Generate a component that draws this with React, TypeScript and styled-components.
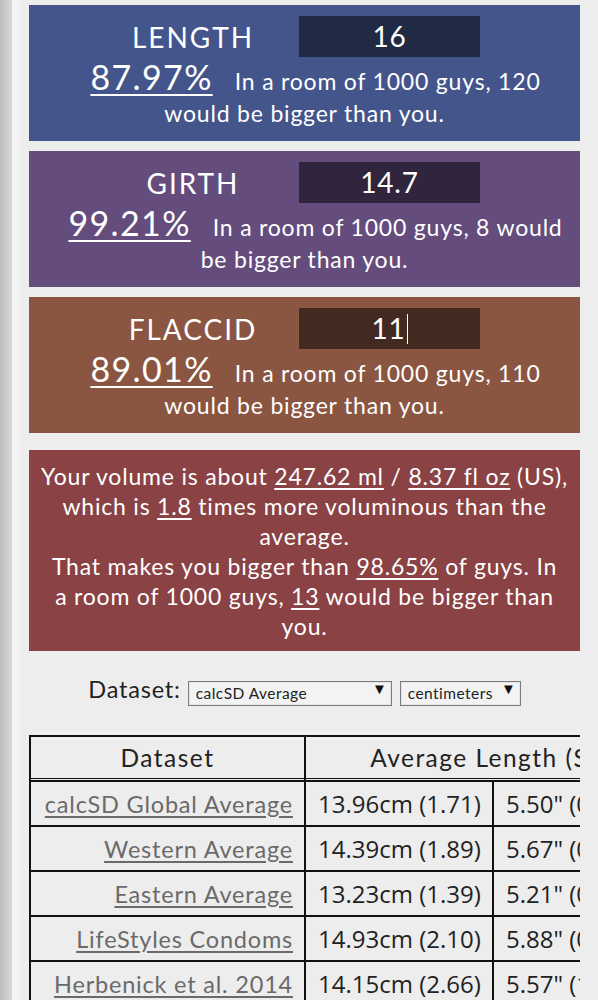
import { createGlobalStyle } from 'styled-components';
import styled from 'styled-components';

type TMeasure = {
  label: string;
  value: string;
  percent: string;
  text: string;
  bg: string;
  field: string;
  caret?: boolean;
};

type TRow = {
  name: string;
  cm: string;
  inch: string;
};

const measures: TMeasure[] = [
  {
    label: 'LENGTH',
    value: '16',
    percent: '87.97%',
    text: 'In a room of 1000 guys, 120 would be bigger than you.',
    bg: '#43558a',
    field: '#212a45'
  },
  {
    label: 'GIRTH',
    value: '14.7',
    percent: '99.21%',
    text: 'In a room of 1000 guys, 8 would be bigger than you.',
    bg: '#644c7c',
    field: '#31253e'
  },
  {
    label: 'FLACCID',
    value: '11',
    percent: '89.01%',
    text: 'In a room of 1000 guys, 110 would be bigger than you.',
    bg: '#8a5541',
    field: '#432a20',
    caret: true
  }
];

const rows: TRow[] = [
  { name: 'calcSD Global Average', cm: '13.96cm (1.71)', inch: '5.50" (0.67)' },
  { name: 'Western Average', cm: '14.39cm (1.89)', inch: '5.67" (0.74)' },
  { name: 'Eastern Average', cm: '13.23cm (1.39)', inch: '5.21" (0.55)' },
  { name: 'LifeStyles Condoms', cm: '14.93cm (2.10)', inch: '5.88" (0.83)' },
  { name: 'Herbenick et al. 2014', cm: '14.15cm (2.66)', inch: '5.57" (1.05)' }
];

export default function App() {
  return (
    <>
      <GlobalStyle />
      <Page>
        <Edge />
        <Main>
          {measures.map((m) => (
            <Panel key={m.label} $bg={m.bg}>
              <InputRow>
                <Label>{m.label}</Label>
                <ValueField $bg={m.field}>
                  {m.value}
                  {m.caret && <Caret />}
                </ValueField>
              </InputRow>
              <Result>
                <Percent>{m.percent}</Percent>
                {m.text}
              </Result>
            </Panel>
          ))}

          <VolumePanel>
            Your volume is about <u>247.62 ml</u> / <u>8.37 fl oz</u> (US), which is{' '}
            <u>1.8</u> times more voluminous than the average.
            <br />
            That makes you bigger than <u>98.65%</u> of guys. In
            <br />a room of 1000 guys, <u>13</u> would be bigger than you.
          </VolumePanel>

          <Controls>
            <span>Dataset:</span>
            <SelectBox $width={204}>
              <Select defaultValue="avg">
                <option value="avg">calcSD Average</option>
              </Select>
              <Arrow>▼</Arrow>
            </SelectBox>
            <SelectBox $width={121}>
              <Select defaultValue="cm">
                <option value="cm">centimeters</option>
              </Select>
              <Arrow>▼</Arrow>
            </SelectBox>
          </Controls>

          <TableWrap>
            <Table>
              <colgroup>
                <col style={{ width: 275 }} />
                <col style={{ width: 188 }} />
                <col style={{ width: 188 }} />
              </colgroup>
              <thead>
                <tr>
                  <Th>Dataset</Th>
                  <Th colSpan={2}>Average Length (SD)</Th>
                </tr>
              </thead>
              <tbody>
                {rows.map((r) => (
                  <tr key={r.name}>
                    <NameCell>
                      <a href="#">{r.name}</a>
                    </NameCell>
                    <NumCell>{r.cm}</NumCell>
                    <NumCell>{r.inch}</NumCell>
                  </tr>
                ))}
              </tbody>
            </Table>
          </TableWrap>
        </Main>
      </Page>
    </>
  );
}

const GlobalStyle = createGlobalStyle`
  body {
    margin: 0;
    background: #ededed;
    font-family: Lato, "Open Sans", sans-serif;
    letter-spacing: 0.05em;
  }
`;

const Page = styled.div`
  display: flex;
  min-height: 100vh;
  overflow: hidden;
`;

const Edge = styled.div`
  flex: 0 0 12px;
  background: linear-gradient(to right, #bdbdbd, #d8d8d8);
  border-right: 8px solid #f3f3f3;
`;

const Main = styled.div`
  flex: 1;
  min-width: 0;
  padding: 5px 18px 0 9px;
  display: flex;
  flex-direction: column;
  gap: 10px;
`;

const Panel = styled.section<{ $bg: string }>`
  background: ${({ $bg }) => $bg};
  color: #fff;
  text-align: center;
  padding: 11px 12px 0;
  height: 136px;
  box-sizing: border-box;
`;

const InputRow = styled.div`
  display: flex;
  justify-content: center;
  align-items: center;
  gap: 6px;
`;

const Label = styled.div`
  width: 200px;
  font-size: 28px;
  letter-spacing: 0.07em;
`;

const ValueField = styled.div<{ $bg: string }>`
  width: 181px;
  height: 41px;
  margin-right: 36px;
  background: ${({ $bg }) => $bg};
  font-size: 28px;
  line-height: 41px;
  display: flex;
  justify-content: center;
  align-items: center;
`;

const Caret = styled.span`
  display: inline-block;
  width: 1px;
  height: 30px;
  margin-left: 1px;
  background: #fff;
`;

const Result = styled.p`
  margin: 4px 0 0;
  font-size: 23px;
  line-height: 32px;
`;

const Percent = styled.span`
  font-size: 34px;
  letter-spacing: 0.04em;
  text-decoration: underline;
  text-underline-offset: 4px;
  text-decoration-thickness: 2px;
  margin: 0 22px;
`;

const VolumePanel = styled.section`
  margin-top: 7px;
  background: #8a4244;
  color: #fff;
  text-align: center;
  font-size: 23px;
  line-height: 30px;
  padding: 11px 10px 10px;

  u {
    text-underline-offset: 3px;
  }
`;

const Controls = styled.div`
  display: flex;
  justify-content: center;
  align-items: center;
  gap: 7px;
  height: 25px;
  margin-top: 15px;
  font-size: 23.5px;
  color: #222;
`;

const SelectBox = styled.div<{ $width: number }>`
  position: relative;
  width: ${({ $width }) => $width}px;
  height: 25px;

  & + & {
    margin-left: 1px;
  }
`;

const Select = styled.select`
  appearance: none;
  width: 100%;
  height: 100%;
  box-sizing: border-box;
  border: 1px solid #7b7b7b;
  box-shadow: inset 0 0 0 1px #e6e6e6;
  background: #f3f3f3;
  color: #222;
  font-family: Lato, sans-serif;
  letter-spacing: 0.03em;
  font-size: 15.5px;
  padding: 0 0 0 7px;
  margin: 0;
`;

const Arrow = styled.span`
  position: absolute;
  right: 4px;
  top: 3px;
  font-size: 15px;
  line-height: 18px;
  color: #111;
  pointer-events: none;
`;

const TableWrap = styled.div`
  margin-top: 24px;
  overflow: hidden;
`;

const Table = styled.table`
  table-layout: fixed;
  width: 651px;
  border-collapse: separate;
  border-spacing: 0;
  border: 1px solid #111;
  white-space: nowrap;
  font-size: 23.5px;
`;

const Th = styled.th`
  font-weight: normal;
  color: #222;
  height: 41px;
  padding: 0 10px;
  font-size: 24.5px;
  letter-spacing: 0.06em;
  border: 1px solid #111;
  border-bottom: 3px double #111;
`;

const NameCell = styled.td`
  text-align: right;
  height: 43px;
  padding: 0 11px 0 0;
  border: 1px solid #111;

  a {
    color: #6a6a6a;
    text-underline-offset: 3px;
  }
`;

const NumCell = styled.td`
  padding: 0 12px;
  border: 1px solid #111;
  color: #222;
  font-family: "Open Sans", sans-serif;
  letter-spacing: 0;
  font-size: 24px;
  overflow: hidden;
`;
